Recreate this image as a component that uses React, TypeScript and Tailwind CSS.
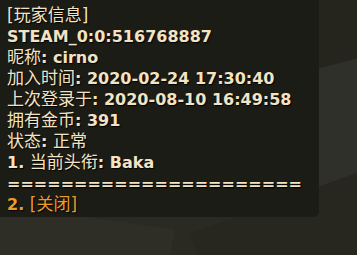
const CJK = "font-normal text-[17px]"

const LINES: { label: string; value: string }[] = [
  { label: "昵称", value: "cirno" },
  { label: "加入时间", value: "2020-02-24 17:30:40" },
  { label: "上次登录于", value: "2020-08-10 16:49:58" },
  { label: "拥有金币", value: "391" },
]

export default function App() {
  return (
    <div className="relative w-[357px] h-[255px] overflow-hidden bg-[#2a2a22]">
      {/* background scene */}
      <div className="absolute left-[230px] top-[-40px] w-[160px] h-[160px] rotate-[20deg] bg-[#25251e]" />
      <div className="absolute left-[300px] top-[60px] w-[120px] h-[140px] rotate-[-15deg] bg-[#30302a]" />
      <div className="absolute left-[-30px] top-[215px] w-[200px] h-[80px] rotate-[8deg] bg-[#2e2e26]" />
      <div className="absolute left-[200px] top-[200px] w-[180px] h-[90px] rotate-[-20deg] bg-[#27271f]" />

      <div
        className="relative w-[319px] h-[217px] rounded-br-md bg-[#1b1b16]/95 pl-[7px] pt-[5px] text-[16px] leading-[21px] font-bold text-[#f3e3c5] [text-shadow:1px_1px_1px_#000]"
        style={{ fontFamily: '"DejaVu Sans", "Noto Sans CJK SC", sans-serif' }}
      >
        <div className={CJK}>[玩家信息]</div>
        <div>STEAM_0:0:516768887</div>
        {LINES.map((l, i) => (
          <div key={i}>
            <span className={CJK}>{l.label}</span>: {l.value}
          </div>
        ))}
        <div>
          <span className={CJK}>状态</span>: <span className={CJK}>正常</span>
        </div>
        <div>
          1. <span className={CJK}>当前头衔</span>: Baka
        </div>
        <div>======================</div>
        <div className="text-[#e99c2c]">
          2. <span className={CJK}>[关闭]</span>
        </div>
      </div>
    </div>
  )
}
